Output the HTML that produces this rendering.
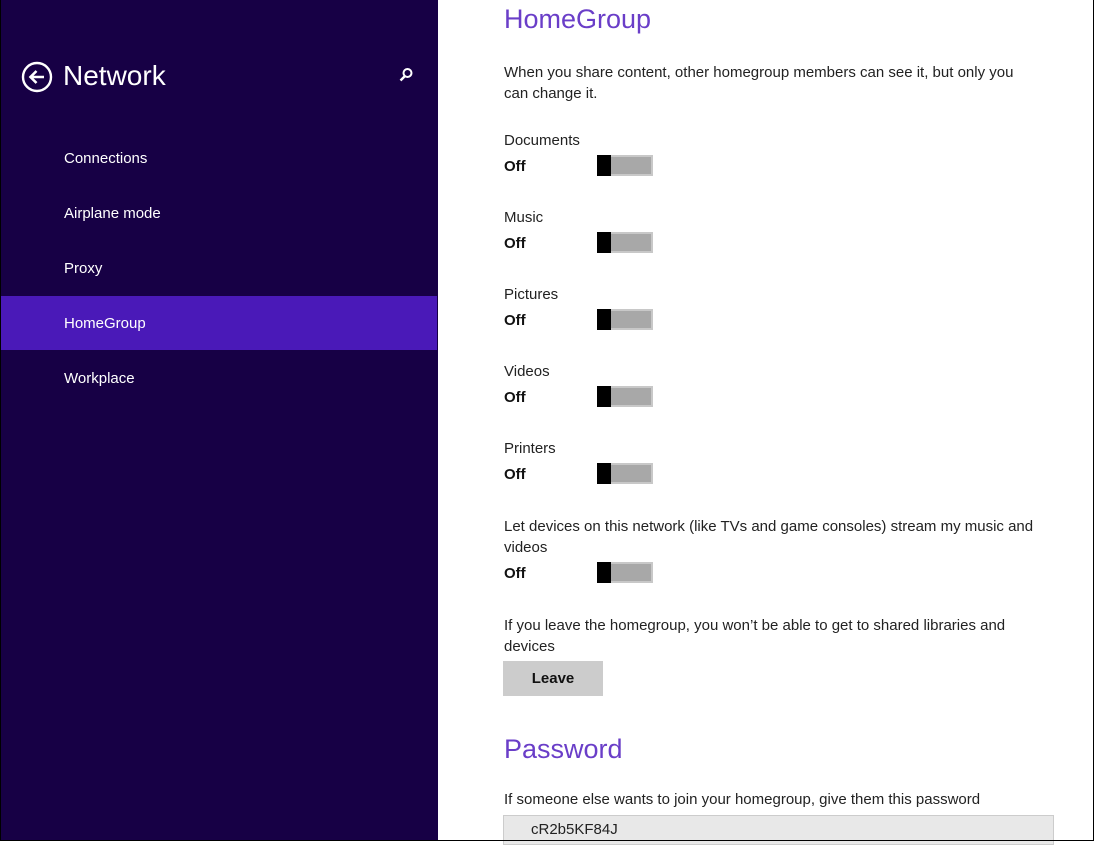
<!DOCTYPE html>
<html><head><style>
*{margin:0;padding:0;box-sizing:border-box}
body{width:1094px;height:841px;overflow:hidden;background:#fff;font-family:"Liberation Sans",sans-serif;position:relative}
#side{position:absolute;left:0;top:0;width:438px;height:841px;background:#170045;border-left:1px solid #000}
.t{position:absolute;white-space:nowrap}
.nav{color:#fff;font-size:15px;left:63px}
.lab{left:504px;font-size:15px;color:#222}
.off{left:504px;font-size:15px;font-weight:bold;color:#111}
.tg{position:absolute;left:597px;width:56px;height:21px;border:2px solid #c8c8c8;background:#a8a8a8}
.tg:before{content:"";position:absolute;left:-2px;top:-2px;width:14px;height:21px;background:#000}
h2{position:absolute;left:504px;font-weight:normal;font-size:27px;color:#6a3ec8;white-space:nowrap}
</style></head><body>
<div id="side">
<svg style="position:absolute;left:20px;top:61px" width="32" height="32" viewBox="0 0 32 32"><circle cx="16" cy="16" r="14" fill="none" stroke="#fff" stroke-width="2.4"/><path d="M23 16H10M15.5 10L9.5 16L15.5 22" fill="none" stroke="#fff" stroke-width="2.6"/></svg>
<div class="t" style="left:62px;top:60px;font-size:28px;color:#fff">Network</div>
<svg style="position:absolute;left:397px;top:67px" width="16" height="16" viewBox="0 0 16 16"><circle cx="9.5" cy="6" r="4" fill="none" stroke="#fff" stroke-width="2"/><path d="M7 9L2.5 13.5" stroke="#fff" stroke-width="2.4"/></svg>
<div class="t nav" style="top:150px">Connections</div>
<div class="t nav" style="top:205px">Airplane mode</div>
<div class="t nav" style="top:260px">Proxy</div>
<div style="position:absolute;left:0;top:296px;width:436px;height:54px;background:#4a19b8"></div>
<div class="t nav" style="top:315px">HomeGroup</div>
<div class="t nav" style="top:370px">Workplace</div>
</div>
<h2 style="top:4px">HomeGroup</h2>
<div class="t lab" style="top:62px;line-height:21px">When you share content, other homegroup members can see it, but only you<br>can change it.</div>
<div class="t lab" style="top:132px">Documents</div><div class="t off" style="top:158px">Off</div><div class="tg" style="top:155px"></div>
<div class="t lab" style="top:209px">Music</div><div class="t off" style="top:235px">Off</div><div class="tg" style="top:232px"></div>
<div class="t lab" style="top:286px">Pictures</div><div class="t off" style="top:312px">Off</div><div class="tg" style="top:309px"></div>
<div class="t lab" style="top:363px">Videos</div><div class="t off" style="top:389px">Off</div><div class="tg" style="top:386px"></div>
<div class="t lab" style="top:440px">Printers</div><div class="t off" style="top:466px">Off</div><div class="tg" style="top:463px"></div>
<div class="t lab" style="top:516px;line-height:21px">Let devices on this network (like TVs and game consoles) stream my music and<br>videos</div>
<div class="t off" style="top:565px">Off</div><div class="tg" style="top:562px"></div>
<div class="t lab" style="top:615px;line-height:21px">If you leave the homegroup, you won’t be able to get to shared libraries and<br>devices</div>
<div style="position:absolute;left:503px;top:661px;width:100px;height:35px;background:#ccc;text-align:center;line-height:36px;font-size:15px;font-weight:bold;color:#111">Leave</div>
<h2 style="top:734px">Password</h2>
<div class="t lab" style="top:791px">If someone else wants to join your homegroup, give them this password</div>
<div style="position:absolute;left:503px;top:815px;width:551px;height:30px;background:#e8e8e8;border:1px solid #ccc;padding:5px 0 0 27px;font-size:15px;color:#222">cR2b5KF84J</div>
<div style="position:absolute;left:0;top:840px;width:1094px;height:1px;background:#000"></div>
<div style="position:absolute;right:0;top:0;width:1px;height:841px;background:#000"></div>
</body></html>
